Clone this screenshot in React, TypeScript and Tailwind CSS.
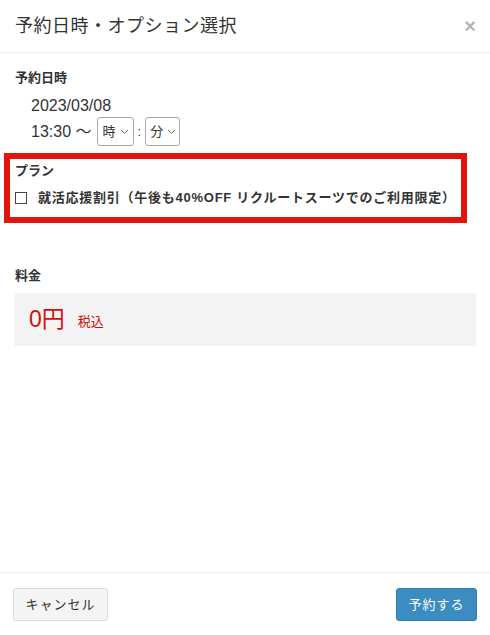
import React from "react";

export default function App() {
  const font = { fontFamily: '"Liberation Sans", "Noto Sans CJK JP", sans-serif' };
  return (
    <div className="w-[490px] h-[635px] bg-white text-[#333] flex flex-col" style={font}>
      <div className="h-[53px] border-b border-[#eeeeee] flex items-center justify-between pl-[15px] pr-[14px]">
        <div className="text-[18px] leading-none tracking-[0.5px] text-[#333]">予約日時・オプション選択</div>
        <div className="text-[20px] leading-none text-[#b5b5b5] font-bold">×</div>
      </div>
      <div className="flex-1 flex flex-col">
        <div className="pt-[17px] pl-[15px] text-[13px] font-bold leading-[16px]">予約日時</div>
        <div className="pl-[31px] pt-[10px] text-[16px] leading-[20px]">2023/03/08</div>
        <div className="pl-[31px] pt-[1px] flex items-center h-[30px] text-[16px]">
          <span>13:30 〜</span>
          <div className="ml-[5px] w-[37px] h-[29px] border border-[#aaa] rounded-[3px] flex items-center justify-between pl-[5px] pr-[4px] text-[13px]">
            <span>時</span>
            <svg width="9" height="6" viewBox="0 0 9 6"><path d="M1 1l3.5 3.5L8 1" fill="none" stroke="#666" strokeWidth="1" /></svg>
          </div>
          <span className="mx-[4px] text-[13px]">:</span>
          <div className="w-[35px] h-[29px] border border-[#aaa] rounded-[3px] flex items-center justify-between pl-[4px] pr-[3px] text-[13px]">
            <span>分</span>
            <svg width="9" height="6" viewBox="0 0 9 6"><path d="M1 1l3.5 3.5L8 1" fill="none" stroke="#666" strokeWidth="1" /></svg>
          </div>
        </div>
        <div className="mt-[7px] ml-[4px] w-[463px] h-[70px] border-[6px] border-[#e3140c] flex flex-col pl-[5px]">
          <div className="pt-[4px] text-[13px] font-bold leading-[16px]">プラン</div>
          <div className="mt-[11px] flex items-center">
            <div className="w-[12px] h-[12px] border border-[#444] ml-[0px]" />
            <span className="ml-[11px] text-[13px] font-bold leading-[16px] tracking-[0.75px]">就活応援割引（午後も40%OFF リクルートスーツでのご利用限定）</span>
          </div>
        </div>
        <div className="mt-[45px] pl-[15px] text-[13px] font-bold leading-[16px]">料金</div>
        <div className="mt-[9px] mx-[14px] h-[53px] bg-[#f3f3f3] flex items-center pl-[15px] text-[#d0100c]">
          <span className="text-[23px] leading-none">0円</span>
          <span className="ml-[13px] text-[13px] leading-none mt-[4px]">税込</span>
        </div>
      </div>
      <div className="h-[63px] border-t border-[#eeeeee] flex items-start justify-between px-[13px] pt-[15px]">
        <div className="w-[95px] h-[33px] bg-[#f4f4f4] border border-[#dcdcdc] rounded-[3px] flex items-center justify-center text-[13px] tracking-[1px] text-[#333]">キャンセル</div>
        <div className="w-[81px] h-[33px] bg-[#3b8cc1] border border-[#3580b2] rounded-[3px] flex items-center justify-center text-[13px] tracking-[1px] text-white">予約する</div>
      </div>
    </div>
  );
}
